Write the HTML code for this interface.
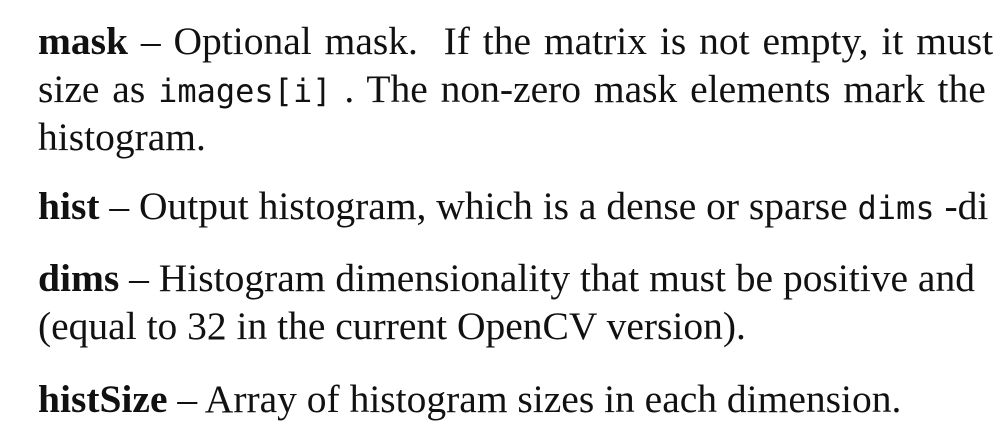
<!DOCTYPE html>
<html><head><meta charset="utf-8"><style>
html,body{margin:0;padding:0;background:#fff;width:1001px;height:444px;overflow:hidden}
.l{position:absolute;left:38px;white-space:nowrap;font-family:"Liberation Serif",serif;font-size:39.5px;line-height:39.5px;color:#111}
.m{font-family:"DejaVu Sans Mono","Liberation Mono",monospace;font-size:32px}
b{font-weight:bold}
</style></head><body>
<div class="l" style="top:22px;word-spacing:3px"><b>mask</b> – Optional mask.&nbsp; If the matrix is not empty, it must</div>
<div class="l" style="top:70px;word-spacing:3px">size as <span class="m">images[i]</span> . The non-zero mask elements mark the</div>
<div class="l" style="top:118px">histogram.</div>
<div class="l" style="top:187px;word-spacing:0px"><b>hist</b> – Output histogram, which is a dense or sparse <span class="m">dims</span> -di</div>
<div class="l" style="top:259px;word-spacing:0px"><b>dims</b> – Histogram dimensionality that must be positive and</div>
<div class="l" style="top:307px">(equal to 32 in the current OpenCV version).</div>
<div class="l" style="top:380px"><b>histSize</b> – Array of histogram sizes in each dimension.</div>
</body></html>
